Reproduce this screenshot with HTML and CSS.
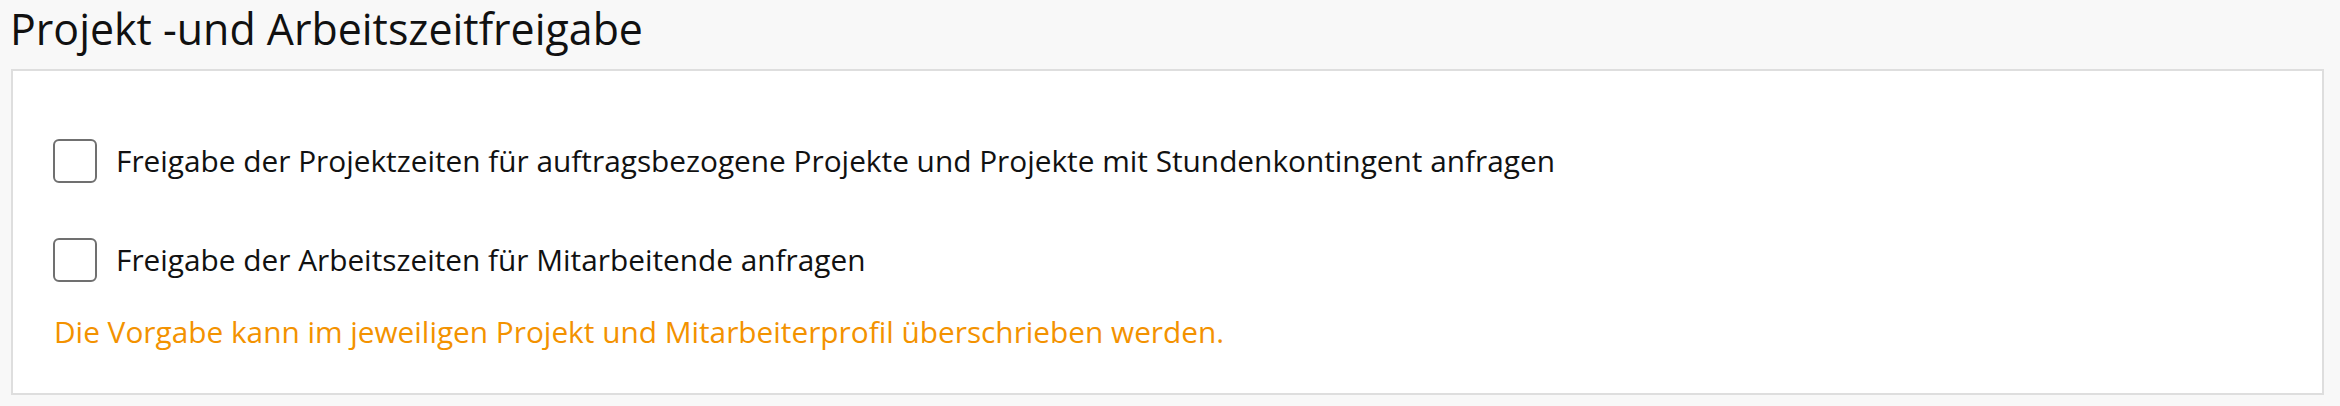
FILE: index.html
```html
<!DOCTYPE html>
<html lang="de">
<head>
<meta charset="utf-8">
<title>Projekt -und Arbeitszeitfreigabe</title>
<link rel="stylesheet" href="styles.css">
</head>
<body>
<h1 class="page-title">Projekt -und Arbeitszeitfreigabe</h1>
<section class="card">
  <label class="check-row">
    <input type="checkbox" class="check-input">
    <span class="check-box"></span>
    <span class="check-label">Freigabe der Projektzeiten für auftragsbezogene Projekte und Projekte mit Stundenkontingent anfragen</span>
  </label>
  <label class="check-row">
    <input type="checkbox" class="check-input">
    <span class="check-box"></span>
    <span class="check-label">Freigabe der Arbeitszeiten für Mitarbeitende anfragen</span>
  </label>
  <p class="hint">Die Vorgabe kann im jeweiligen Projekt und Mitarbeiterprofil überschrieben werden.</p>
</section>
</body>
</html>
```
FILE: styles.css
```css
html, body {
  margin: 0;
  padding: 0;
}
body {
  background: #f8f8f8;
  font-family: "Open Sans", "Noto Sans", sans-serif;
  color: #111;
}
.page-title {
  margin: 0;
  padding: 1px 0 0 10px;
  height: 56px;
  font-size: 42.9px;
  font-weight: 400;
  line-height: 56px;
  color: #111;
}
.card {
  margin: 12px 16px 0 11px;
  height: 326px;
  box-sizing: border-box;
  border: 2px solid #dedede;
  background: #fff;
  padding: 68px 40px 0 40px;
  display: flex;
  flex-direction: column;
}
.check-row {
  display: flex;
  align-items: center;
  gap: 19px;
  height: 44px;
  margin-bottom: 55px;
  font-size: 29.8px;
  line-height: 40px;
  cursor: pointer;
}
.check-row:nth-of-type(2) {
  margin-bottom: 29.6px;
}
.check-input {
  position: absolute;
  opacity: 0;
  width: 0;
  height: 0;
  margin: 0;
}
.check-box {
  flex: 0 0 auto;
  width: 44px;
  height: 44px;
  box-sizing: border-box;
  border: 2px solid #707070;
  border-radius: 6px;
  background: #fff;
}
.check-label {
  white-space: nowrap;
}
.hint {
  margin: 0;
  padding-left: 1px;
  font-size: 29.8px;
  line-height: 40px;
  color: #f39200;
  white-space: nowrap;
}
```
